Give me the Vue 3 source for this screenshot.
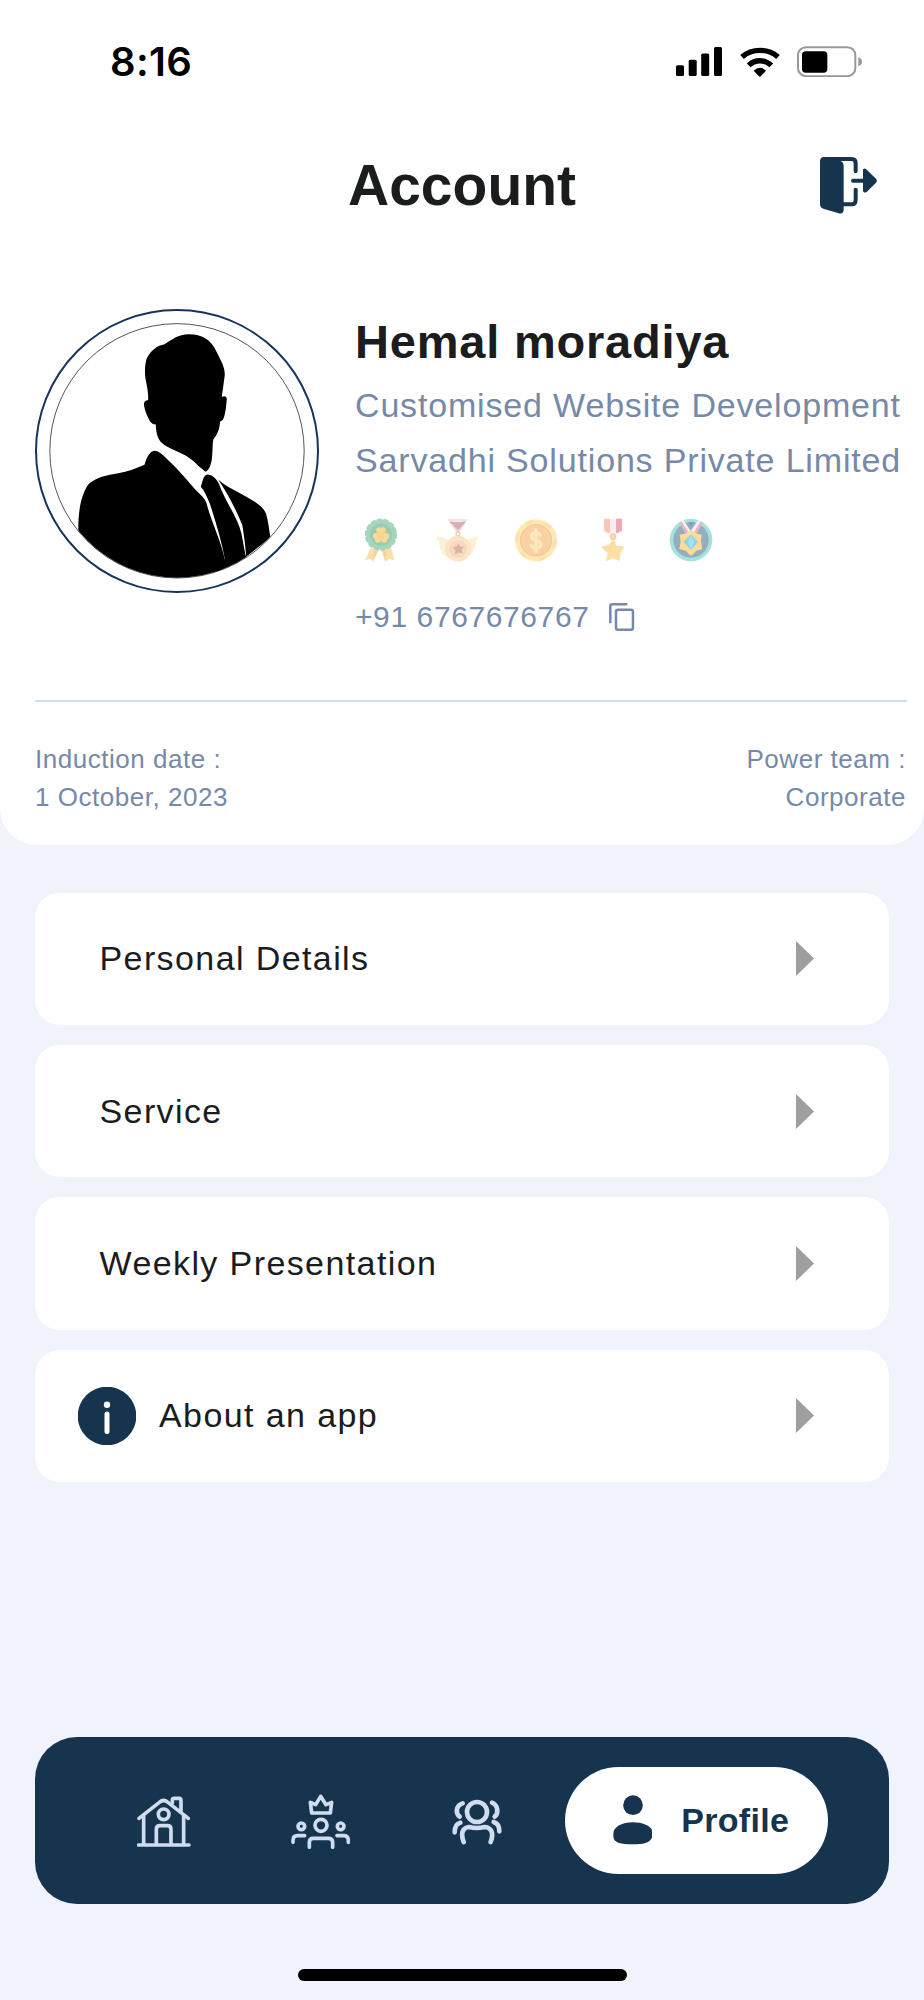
<script setup>
import { ref } from "vue";

// Rows of the account menu.
const menuItems = [
    { id: "personal", label: "Personal Details" },
    { id: "service", label: "Service" },
    { id: "weekly", label: "Weekly Presentation" },
    { id: "about", label: "About an app", info: true },
];

const member = {
    name: "Hemal moradiya",
    category: "Customised Website Development",
    company: "Sarvadhi Solutions Private Limited",
    phone: "+91 6767676767",
    inductionDate: "1 October, 2023",
    powerTeam: "Corporate",
};

const copied = ref(false);

// Copies the phone number when the clipboard is available.
function copyPhone() {
    if (!navigator.clipboard) return;
    navigator.clipboard.writeText(member.phone);
    copied.value = true;
}
</script>

<template>
    <div class="screen">
        <header class="top-card">
            <div class="status-bar">
                <span class="clock">8:16</span>
                <div class="status-icons">
                    <svg class="signal" viewBox="0 0 46 29">
                        <rect x="0" y="18.3" width="8" height="10.7" rx="1.5" />
                        <rect x="12.7" y="12.7" width="8" height="16.3" rx="1.5" />
                        <rect x="25.2" y="6.5" width="8" height="22.5" rx="1.5" />
                        <rect x="38" y="0" width="8" height="29" rx="1.5" />
                    </svg>
                    <svg class="wifi" viewBox="268 48 120 90">
                        <path d="M274 78C304 51.500 352 51.500 382 78" class="wifi-arc" />
                        <path d="M294 103C313 84.500 343 84.500 362 103" class="wifi-arc" />
                        <path d="M309 119Q328 102 346 119L330 136Q328 138 325 136Z" />
                    </svg>
                    <svg class="battery" viewBox="440 46 195 93">
                        <rect x="443" y="49.500" width="172" height="87" rx="24" class="battery-shell" />
                        <rect x="455" y="62" width="76" height="64" rx="11" />
                        <path d="M624 80Q635 84 635 93.500T624 107Z" class="battery-cap" />
                    </svg>
                </div>
            </div>

            <div class="title-bar">
                <h1 class="title">Account</h1>
                <button class="icon-btn logout" type="button" aria-label="Log out">
                    <svg viewBox="509 380 171 171">
                        <path
                            d="M522 386H604Q616 386 616 399V423M616 478V508Q616 522 604 522H574"
                            class="door-frame"
                        />
                        <path
                            d="M522 380H545L571 392Q580 396 580 407V537Q580 553 565 549L519 535Q509 532 509 522V393Q509 380 522 380Z"
                        />
                        <path d="M608 451H645" class="door-frame" />
                        <path
                            d="M638 420Q638 411 647 416L677 445Q682 451 677 457L649 485Q638 490 638 480Z"
                        />
                    </svg>
                </button>
            </div>

            <section class="profile">
                <svg class="avatar" viewBox="45 56 853 853">
                    <defs>
                        <clipPath id="avatar-clip">
                            <circle cx="471.500" cy="482" r="381" />
                        </clipPath>
                    </defs>
                    <circle cx="471.500" cy="482.500" r="423.500" class="ring-outer" />
                    <circle cx="471.500" cy="482" r="382" class="ring-inner" />
                    <g clip-path="url(#avatar-clip)">
                        <path
                            d="M508 132C545 132 573 147 589 182C604 212 616 231 615 254L610 292L606 320Q621 314 621 328L618 356C614 378 612 391 601 394C599 420 592 433 581 447C577 462 580 478 576 508C573 526 567 541 557 545L537 528C516 504 490 491 464 480C442 471 424 461 416 445C410 432 408 419 408 403Q397 403 391 394C384 380 374 362 372 341Q374 329 385 330C386 310 382 290 377 266C374 244 375 217 382 202C394 180 412 166 434 162C456 149 474 132 508 132Z"
                        />
                        <path
                            d="M404 482C414 482 425 491 436 501C477 538 507 577 536 608Q560 628 563 650C577 700 603 750 616 812L600 880H160L175 722C175 674 179 622 205 583C227 561 262 554 295 549C324 545 350 534 374 524C379 506 388 484 404 482Z"
                        />
                        <path
                            d="M562 553C577 553 590 566 597 580C617 636 653 680 665 730L678 800L616 812C606 755 588 696 570 640C561 620 554 602 543 590C548 576 550 556 562 553Z"
                        />
                        <path
                            d="M595 568C621 591 653 604 681 621C706 635 735 650 741 679C748 706 749 731 753 742L679 800C678 773 673 740 668 706C651 662 621 606 595 568Z"
                        />
                        <path d="M614 808L680 796L660 880H560Z" />
                    </g>
                </svg>

                <div class="profile-info">
                    <h2 class="name">{{ member.name }}</h2>
                    <p class="subtitle">{{ member.category }}</p>
                    <p class="subtitle">{{ member.company }}</p>

                    <div class="badges">
                        <!-- clover rosette -->
                        <svg viewBox="41 55 132 132">
                            <path d="M76 146L59 182L75 178L84 186L99 152Z" fill="#fbdfa8" />
                            <path d="M138 146L147 182L131 178L120 186L110 152Z" fill="#fbdfa8" />
                            <path d="M85 154L83 184L99 152ZM124 154L119 184L110 152Z" fill="#f8d0a0" />
                            <circle cx="107" cy="105" r="44" fill="#a5d5bc" />
                            <circle
                                cx="107"
                                cy="105"
                                r="43"
                                fill="none"
                                stroke="#a5d5bc"
                                stroke-width="11"
                                stroke-linecap="round"
                                stroke-dasharray="8 11.300"
                            />
                            <circle cx="107" cy="105" r="33" fill="#98ccb0" />
                            <circle cx="101" cy="91" r="8" fill="#fbdb9b" />
                            <circle cx="113" cy="91" r="8" fill="#fbdb9b" />
                            <circle cx="92" cy="109" r="9" fill="#fbdb9b" />
                            <circle cx="98" cy="120" r="9" fill="#fbdb9b" />
                            <circle cx="123" cy="109" r="9" fill="#fbdb9b" />
                            <circle cx="117" cy="120" r="9" fill="#fbdb9b" />
                            <path d="M94 95H120L116 118H98Z" fill="#f9d495" />
                        </svg>
                        <!-- winged medal -->
                        <svg viewBox="274 55 132 132">
                            <path d="M308 58H320L340 86L358 58H369L344 99H335Z" fill="#f1dedd" />
                            <path d="M314 66H364L340 92Z" fill="#d6b0b4" />
                            <path d="M308 58H369L366 64H312Z" fill="#f3e4e4" />
                            <circle cx="340" cy="103" r="6" fill="none" stroke="#efcfb1" stroke-width="4" />
                            <path
                                d="M308 119L276 110Q276 123 284 126Q280 132 286 140Q284 149 291 153Q289 162 298 166L320 180ZM368 119L399 110Q399 123 391 126Q396 132 390 140Q391 149 385 153Q386 162 377 166L355 180Z"
                                fill="#fdf0d6"
                            />
                            <circle cx="340" cy="147" r="39" fill="#fae3c6" />
                            <circle cx="340" cy="148" r="28" fill="#f7d9bd" />
                            <circle cx="340" cy="148" r="29" fill="none" stroke="#fdecd2" stroke-width="3" />
                            <path d="M341 132L347 141L358 141L351 150L354 162L342 158L331 165L332 152L324 143L335 141Z" fill="#d9b5a8" />
                        </svg>
                        <!-- coin -->
                        <svg viewBox="505 55 132 132">
                            <circle cx="571" cy="122" r="63" fill="#fee8b4" />
                            <circle
                                cx="571"
                                cy="122"
                                r="58"
                                fill="none"
                                stroke="#fcdfaa"
                                stroke-width="9"
                                stroke-dasharray="22 38"
                            />
                            <circle cx="571" cy="122" r="48" fill="#f9d1a2" />
                            <circle cx="571" cy="122" r="46" fill="none" stroke="#f7c998" stroke-width="4" />
                            <path
                                d="M584 107Q579 98 569 99Q556 101 557 111Q559 120 571 122Q586 124 586 135Q585 146 572 146Q560 146 556 137M571 90V155"
                                fill="none"
                                stroke="#fee9bd"
                                stroke-width="10"
                                stroke-linecap="round"
                            />
                        </svg>
                        <!-- ribbon star -->
                        <svg viewBox="736 55 132 132">
                            <path d="M775 57H829V88Q829 96 822 98L806 103H798L782 98Q775 96 775 88Z" fill="#f2eff1" />
                            <path d="M775 57H793V101L782 98Q775 96 775 88Z" fill="#fac5b4" />
                            <path d="M811 57H829V88Q829 96 822 98L811 101Z" fill="#f2a7b5" />
                            <circle cx="802" cy="111" r="10" fill="#f7cda7" />
                            <circle cx="802" cy="111" r="5" fill="#fbe1b7" />
                            <path
                                d="M802 120Q807 120 812 138L833 140Q838 143 819 160L823 181Q822 187 802 175Q782 187 781 183L786 160Q764 144 769 140L791 138Q797 120 802 120Z"
                                fill="#fee0a5"
                            />
                            <path d="M802 126V157L770 142ZM834 142L802 157L822 182Z" fill="#fbd7a0" opacity="0.5" />
                        </svg>
                        <!-- gem medal -->
                        <svg viewBox="971 55 132 132">
                            <circle cx="1037" cy="121" r="64" fill="#a3e1de" />
                            <circle cx="1037" cy="121" r="53" fill="#95adbe" />
                            <path d="M1003 68L1014 60L1036 94L1059 60L1072 68L1052 103H1022Z" fill="#f4f0f5" />
                            <path d="M1003 69L1008 65L1029 98L1022 103ZM1072 69L1066 65L1046 98L1052 103Z" fill="#e9b3be" />
                            <path d="M1028 67H1047L1037 82Z" fill="#8aa0b6" />
                            <path
                                d="M1037 90L1051 101L1069 105L1067 126L1071 148L1053 153L1037 169L1021 153L1002 148L1006 126L1003 105L1023 101Z"
                                fill="#fcdb98"
                            />
                            <path d="M1037 104L1058 127L1037 151L1015 127Z" fill="#8bd3e6" />
                            <path d="M1037 104L1046 127L1037 151L1028 127Z" fill="#a3e0ee" />
                        </svg>
                    </div>

                    <div class="phone-row">
                        <span class="phone">{{ member.phone }}</span>
                        <button
                            class="icon-btn copy"
                            type="button"
                            :aria-label="copied ? 'Copied' : 'Copy'"
                            @click="copyPhone"
                        >
                            <svg viewBox="797 308 76 84">
                                <path d="M801 369V318Q801 312 807 312H852" />
                                <rect x="818" y="328" width="51" height="60" rx="6" />
                            </svg>
                        </button>
                    </div>
                </div>
            </section>

            <hr class="divider" />

            <div class="facts">
                <p class="fact">Induction date :<br />{{ member.inductionDate }}</p>
                <p class="fact fact-end">Power team :<br />{{ member.powerTeam }}</p>
            </div>
        </header>

        <main class="menu">
            <button
                v-for="item in menuItems"
                :key="item.id"
                class="menu-item"
                :class="{ 'with-icon': item.info }"
                type="button"
            >
                <svg v-if="item.info" class="info-icon" viewBox="0 0 58 58">
                    <circle cx="29" cy="29" r="29.300" class="info-disc" />
                    <circle cx="29" cy="17.700" r="3.200" />
                    <rect x="26.500" y="24.500" width="5" height="22.500" rx="2.500" />
                </svg>
                <span class="menu-label">{{ item.label }}</span>
                <svg class="arrow" viewBox="0 0 18 35">
                    <path d="M0 0L18 17.500L0 35Z" />
                </svg>
            </button>
        </main>

        <nav class="tab-bar">
            <button class="icon-btn tab" type="button" aria-label="Home">
                <svg class="tab-home" viewBox="82 79 160 154">
                    <path d="M87 226H238M102 140V224M222 140V224" />
                    <path d="M88 146L149 98Q162 87 175 98L236 146" />
                    <path d="M188 100V92Q188 86 194 86H208Q214 86 214 92V124" />
                    <circle cx="162" cy="134" r="16" />
                    <path d="M140 224V179Q140 168 151 168H173Q184 168 184 179V224" />
                </svg>
            </button>
            <button class="icon-btn tab" type="button" aria-label="Leaders">
                <svg class="tab-leaders" viewBox="541 69 177 166">
                    <path d="M603 126L599 94L615 101L630 76L646 101L663 94L659 126Z" />
                    <circle cx="631" cy="163" r="18" />
                    <circle cx="572" cy="166" r="10" />
                    <circle cx="690" cy="166" r="10" />
                    <path d="M596 229V214Q596 202 608 202H653Q666 202 666 214V229" />
                    <path d="M547 214V208Q547 194 561 194H582M679 194H699Q713 194 713 208V214" />
                </svg>
            </button>
            <button class="icon-btn tab" type="button" aria-label="Team">
                <svg class="tab-team" viewBox="64 180 150 137">
                    <circle cx="139" cy="219" r="30" />
                    <path d="M96 193C75 200 74 223 87 233M184 191C203 199 204 224 192 233" />
                    <path d="M72 280Q72 255 89 251M206 277Q206 254 189 249" />
                    <path d="M99 309C90 285 94 266 115 264Q139 270 162 264C185 266 189 285 180 309" />
                </svg>
            </button>
            <button class="tab-active" type="button">
                <svg viewBox="545 167 119 149">
                    <circle cx="605" cy="197.500" r="29.500" />
                    <path
                        d="M546 283C546 262 574 249 604 249C636 249 656 260 663 273V292C656 312 638 315 604 315C570 315 546 312 546 291Z"
                    />
                </svg>
                <span>Profile</span>
            </button>
        </nav>

        <div class="home-indicator"></div>
    </div>
</template>

<style>
body {
    margin: 0;
    background: #f0f3fb;
}
</style>

<style scoped>
.screen {
    width: 924px;
    height: 2000px;
    display: flex;
    flex-direction: column;
    overflow: hidden;
    background: #f0f3fb;
    color: #1a1c1e;
    font-family: "Liberation Sans", Arial, sans-serif;
}

svg {
    display: block;
    flex: none;
}

h1,
h2,
p {
    margin: 0;
}

button {
    border: 0;
    font: inherit;
    color: inherit;
    letter-spacing: inherit;
}

.icon-btn {
    padding: 0;
    background: none;
}

.top-card {
    height: 844.7px;
    flex: none;
    background: #fff;
    border-radius: 0 0 37px 37px;
}

.status-bar {
    height: 123px;
    padding: 0 62px 0 110px;
    box-sizing: border-box;
    display: flex;
    justify-content: space-between;
    align-items: center;
}

.clock {
    font-family: Inter, "Liberation Sans", sans-serif;
    font-size: 40px;
    font-weight: 600;
    letter-spacing: 0.3px;
    color: #000;
}

.status-icons {
    display: flex;
    align-items: center;
    gap: 17.5px;
}

.signal {
    width: 46px;
    height: 29px;
}

.wifi {
    width: 40px;
    height: 30px;
}

.wifi-arc {
    fill: none;
    stroke: #000;
    stroke-width: 16;
}

.battery {
    width: 65px;
    height: 31px;
}

.battery-shell {
    fill: none;
    stroke: #989898;
    stroke-width: 6;
}

.battery-cap {
    fill: #989898;
}

.title-bar {
    height: 123px;
    padding: 0 47px;
    display: grid;
    grid-template-columns: 1fr auto 1fr;
    align-items: center;
}

.title {
    grid-column: 2;
    font-size: 57px;
    font-weight: 700;
    line-height: 66px;
}

.logout {
    justify-self: end;
    margin-top: 1px;
}

.logout svg {
    width: 57px;
    height: 57px;
    fill: #17344f;
}

.logout .door-frame {
    fill: none;
    stroke: #17344f;
    stroke-width: 12;
    stroke-linecap: round;
}

.profile {
    height: 391px;
    padding: 62.7px 0 0 35px;
    box-sizing: border-box;
    display: flex;
    align-items: flex-start;
    gap: 36px;
}

.avatar {
    width: 284px;
    height: 284px;
    overflow: visible;
}

.ring-outer {
    fill: none;
    stroke: #17345a;
    stroke-width: 6;
}

.ring-inner {
    fill: none;
    stroke: #333;
    stroke-width: 2.5;
}

.profile-info {
    padding-top: 3px;
    color: #758aa8;
    white-space: nowrap;
}

.name {
    font-size: 47px;
    line-height: 60px;
    letter-spacing: 0.8px;
    margin-bottom: 6.8px;
    color: #1a1c1e;
}

.subtitle {
    font-size: 34px;
    line-height: 54.7px;
    letter-spacing: 0.83px;
}

.badges {
    margin: 30.5px 0 0 3.7px;
    display: flex;
    gap: 33.5px;
}

.badges svg {
    width: 44px;
    height: 44px;
}

.phone-row {
    margin-top: 36.8px;
    height: 36px;
    display: flex;
    align-items: center;
    gap: 20px;
}

.phone {
    font-size: 30px;
    line-height: 36px;
    letter-spacing: 0.6px;
}

.copy svg {
    width: 25.3px;
    height: 28px;
    fill: none;
    stroke: #758aa8;
    stroke-width: 7.5;
}

.divider {
    height: 2.5px;
    margin: 62.5px 17px 0 35px;
    border: 0;
    background: #d0dcec;
}

.facts {
    padding: 38px 18px 0 35px;
    display: flex;
    justify-content: space-between;
    color: #758aa8;
}

.fact {
    font-size: 26px;
    line-height: 38px;
    letter-spacing: 0.53px;
}

.fact-end {
    text-align: right;
}

.menu {
    padding: 48px 35px 0;
    display: flex;
    flex-direction: column;
    gap: 19.8px;
}

.menu-item {
    height: 132.5px;
    padding: 0 75px 0 64.5px;
    border-radius: 25px;
    background: #fff;
    display: flex;
    align-items: center;
    text-align: left;
}

.menu-item.with-icon {
    padding-left: 43px;
}

.info-icon {
    width: 58px;
    height: 58px;
    margin-right: 23px;
    fill: #fff;
}

.info-disc {
    fill: #17344f;
}

.menu-label {
    flex: 1;
    font-size: 34px;
    letter-spacing: 1.4px;
}

.arrow {
    width: 18px;
    height: 35px;
    fill: #9e9ea0;
}

.tab-bar {
    height: 167px;
    margin: auto 35px 0;
    padding: 0 61.5px 0 73px;
    box-sizing: border-box;
    flex: none;
    border-radius: 42px;
    background: #17344f;
    display: flex;
    align-items: center;
}

.tab {
    width: 112px;
    margin: 3px 44.3px 0 0;
    flex: none;
    display: flex;
    justify-content: center;
}

.tab:nth-child(3) {
    margin-right: 0;
}

.tab svg {
    fill: none;
    stroke: #d0dcef;
    stroke-width: 11;
    stroke-linecap: round;
    stroke-linejoin: round;
}

.tab-home {
    width: 53.3px;
    height: 51.3px;
}

.tab-leaders {
    width: 59px;
    height: 55.3px;
}

.tab-team {
    width: 50px;
    height: 45.7px;
}

.tab .tab-team {
    stroke-width: 14;
}

.tab-active {
    width: 263px;
    height: 107px;
    flex: none;
    margin-left: auto;
    padding: 0 0 0 48px;
    box-sizing: border-box;
    border-radius: 54px;
    background: #fff;
    color: #17344f;
    display: flex;
    align-items: center;
    gap: 29px;
    font-size: 34px;
    font-weight: 700;
    letter-spacing: 0.3px;
}

.tab-active svg {
    width: 39.7px;
    height: 49.7px;
    fill: #17344f;
}

.home-indicator {
    width: 329px;
    height: 12px;
    margin: 65.3px auto 19px;
    flex: none;
    border-radius: 6px;
    background: #000;
}
</style>
